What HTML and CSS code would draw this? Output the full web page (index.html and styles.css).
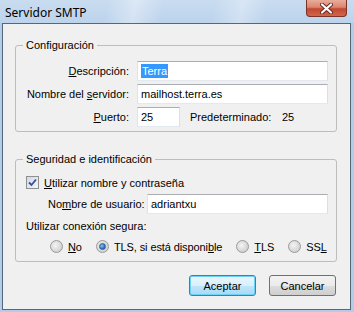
FILE: index.html
```html
<!DOCTYPE html>
<html lang="es">
<head>
    <title>Servidor SMTP</title>
    <meta charset="utf-8">
    <link rel="stylesheet" href="styles.css">
</head>
<body>

    <div class="window">
        <!-- Title bar -->
        <div class="titlebar">
            <span class="title">Servidor SMTP</span>
            <div class="close-btn">
                <svg width="15" height="11" viewBox="0 0 15 11">
                    <path d="M3 1.5 L12 9.5 M12 1.5 L3 9.5" stroke="#5a2a22" stroke-width="4" stroke-linecap="round"/>
                    <path d="M3 1.5 L12 9.5 M12 1.5 L3 9.5" stroke="#ffffff" stroke-width="2.2" stroke-linecap="round"/>
                </svg>
            </div>
        </div>

        <div class="client">
            <fieldset class="group group-config">
                <legend>Configuración</legend>
                <div class="form-grid">
                    <label class="lbl"><u>D</u>escripción:</label>
                    <div class="field"><span class="sel">Terra</span></div>

                    <label class="lbl">Nombre del <u>s</u>ervidor:</label>
                    <div class="field">mailhost.terra.es</div>

                    <label class="lbl"><u>P</u>uerto:</label>
                    <div class="port-row">
                        <div class="field port">25</div>
                        <span class="default-lbl">Predeterminado:</span>
                        <span>25</span>
                    </div>
                </div>
            </fieldset>

            <fieldset class="group group-security">
                <legend>Seguridad e identificación</legend>

                <div class="check-row">
                    <span class="checkbox">
                        <svg width="9" height="9" viewBox="0 0 9 9">
                            <path d="M1 4.5 L3.5 7 L8 1.5" fill="none" stroke="#3b4f8c" stroke-width="1.8"/>
                        </svg>
                    </span>
                    <span><u>U</u>tilizar nombre y contraseña</span>
                </div>

                <div class="user-row">
                    <label class="user-lbl">No<u>m</u>bre de usuario:</label>
                    <div class="field user-field">adriantxu</div>
                </div>

                <div class="secure-lbl">Utilizar conexión segura:</div>

                <div class="radio-row">
                    <div class="radio-item"><span class="radio"></span><span><u>N</u>o</span></div>
                    <div class="radio-item"><span class="radio checked"></span><span>TLS, si está disponi<u>b</u>le</span></div>
                    <div class="radio-item"><span class="radio"></span><span><u>T</u>LS</span></div>
                    <div class="radio-item"><span class="radio"></span><span>SS<u>L</u></span></div>
                </div>
            </fieldset>

            <div class="buttons">
                <button class="dlg-button default">Aceptar</button>
                <button class="dlg-button">Cancelar</button>
            </div>
        </div>
    </div>

</body>
</html>
```

FILE: styles.css
```css
body {
    margin: 0;
    width: 354px;
    height: 312px;
    overflow: hidden;
    background: #b3cde8;
    font-family: 'Liberation Sans', Arial, sans-serif;
    font-size: 11px;
    color: #000;
}

.window {
    display: flex;
    flex-direction: column;
    height: 312px;
}

/* Title bar */
.titlebar {
    height: 23px;
    display: flex;
    align-items: flex-start;
    background:
        linear-gradient(100deg, rgba(255,255,255,0) 30%, rgba(255,255,255,0.35) 38%, rgba(255,255,255,0) 46%,
                        rgba(255,255,255,0) 60%, rgba(255,255,255,0.3) 68%, rgba(255,255,255,0) 75%),
        linear-gradient(#c9dcf0, #bcd3ec);
}

.title {
    font-family: 'Noto Sans', 'Liberation Sans', sans-serif;
    font-size: 12px;
    padding: 4px 0 0 5px;
}

.close-btn {
    margin-left: auto;
    margin-right: 7px;
    width: 41px;
    height: 17px;
    border: 1px solid #7a3328;
    border-top: none;
    border-radius: 0 0 4px 4px;
    background: linear-gradient(#e9ad9c, #db8570 45%, #c4472f 55%, #d0664c);
    display: flex;
    justify-content: center;
    align-items: center;
    box-sizing: border-box;
}

/* Client area */
.client {
    flex: 1;
    margin: 0 3px 2px 2px;
    border: 1px solid #56677a;
    background: #f0f0f0;
    display: flex;
    flex-direction: column;
}

.group {
    margin: 14px 13px 0 12px;
    padding: 0;
    border: 1px solid #bdbdbd;
    border-radius: 3px;
    min-width: 0;
}

.group legend {
    margin-left: 7px;
    padding: 0 3px;
    line-height: 14px;
}

.group-security {
    margin-top: 20px;
}

.form-grid {
    display: grid;
    grid-template-columns: 113px 191px;
    column-gap: 8px;
    row-gap: 3px;
    margin: 9px 0 4px;
    align-items: center;
}

.lbl {
    text-align: right;
}

.field {
    height: 20px;
    box-sizing: border-box;
    border: 1px solid #abadb3;
    border-color: #abadb3 #dbdfe6 #e3e9ef #e2e3ea;
    background: #fff;
    padding: 0 3px;
    display: flex;
    align-items: center;
    white-space: nowrap;
}

.sel {
    background: #3399ff;
    color: #fff;
    padding: 1px 1px;
}

.port-row {
    display: flex;
    align-items: center;
}

.field.port {
    width: 43px;
}

.default-lbl {
    margin-left: 10px;
    width: 92px;
}

/* Security group */
.check-row {
    display: flex;
    align-items: center;
    gap: 5px;
    margin: 10px 0 0 10px;
}

.checkbox {
    width: 13px;
    height: 13px;
    box-sizing: border-box;
    border: 1px solid #8e8f8f;
    background: linear-gradient(135deg, #cfd9ea, #f3f6fb);
    display: flex;
    align-items: center;
    justify-content: center;
}

.user-row {
    display: flex;
    align-items: center;
    margin: 5px 0 0 32px;
}

.user-lbl {
    width: 99px;
}

.field.user-field {
    width: 181px;
}

.secure-lbl {
    margin: 6px 0 0 10px;
}

.radio-row {
    display: flex;
    gap: 14px;
    margin: 8px 0 8px 34px;
    letter-spacing: -0.1px;
}

.radio-item {
    display: flex;
    align-items: center;
    gap: 5px;
}

.radio {
    width: 13px;
    height: 13px;
    box-sizing: border-box;
    border-radius: 50%;
    border: 1px solid #9a9a9a;
    background: radial-gradient(circle at 40% 40%, #f4f4f4, #d2d2d2 70%);
    display: flex;
    align-items: center;
    justify-content: center;
}

.radio.checked::after {
    content: "";
    width: 5px;
    height: 5px;
    border-radius: 50%;
    background: radial-gradient(circle at 35% 35%, #8ac4f0, #1c5aa6 80%);
    border: 1px solid #2f5f94;
}

/* Buttons */
.buttons {
    display: flex;
    justify-content: flex-end;
    gap: 13px;
    margin: 13px 14px 0 0;
}

.dlg-button {
    width: 67px;
    height: 21px;
    font-family: 'Liberation Sans', Arial, sans-serif;
    font-size: 11px;
    color: #000;
    border: 1px solid #707070;
    border-radius: 3px;
    background: linear-gradient(#f2f2f2, #ebebeb 50%, #dddddd 51%, #cfcfcf);
    padding: 0;
}

.dlg-button.default {
    border-color: #3c7fb1;
    box-shadow: inset 0 0 0 1px #6cd2f8;
    background: linear-gradient(#eaf6fd, #d9f0fc 50%, #bee6fd 51%, #a7d9f5);
}
```
